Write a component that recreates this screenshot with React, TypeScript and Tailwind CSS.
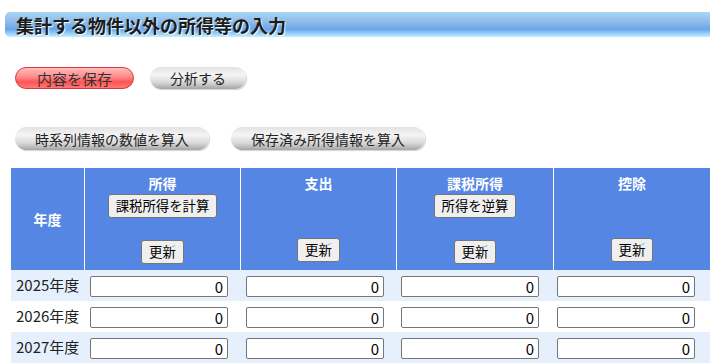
import React from "react";

const years = ["2025年度", "2026年度", "2027年度"];

function SysBtn({ children, className = "" }: { children: React.ReactNode; className?: string }) {
  return (
    <button
      className={
        "h-[24px] px-[7px] border border-[#767676] rounded-[3px] bg-[#efefef] text-[13.4px] leading-none text-black " +
        className
      }
    >
      {children}
    </button>
  );
}

function NumInput() {
  return (
    <input
      readOnly
      value="0"
      className="w-[138px] h-[21px] border border-[#767676] rounded-[2px] bg-white text-right pr-[4px] text-[15px] text-black outline-none"
    />
  );
}

const grayPill =
  "rounded-full bg-[linear-gradient(180deg,#e2e2e2_0%,#f5f5f5_35%,#d8d8d8_70%,#a4a4a4_100%)] shadow-[1px_1px_1px_rgba(0,0,0,0.18)] text-[14px] text-[#222] leading-none";

export default function App() {
  return (
    <div className="w-[710px] h-[363px] overflow-hidden bg-white font-['Noto_Sans_CJK_JP','Noto_Sans',sans-serif] text-[#222]">
      <div className="pt-[12px] pl-[5px]">
        <div className="h-[25px] w-[720px] rounded-l-[5px] bg-[linear-gradient(180deg,#a9d5f5_0%,#8fbbe8_40%,#7aaeea_55%,#6aa8ee_70%,#c0f0ff_100%)] flex items-center pl-[11px]">
          <span className="text-[18px] font-bold text-[#1c1c1c] leading-none [text-shadow:1px_1px_1px_#ffffff]">
            集計する物件以外の所得等の入力
          </span>
        </div>
      </div>

      <div className="flex gap-[16px] pl-[15px] mt-[30px]">
        <button className="w-[119px] h-[22px] rounded-full border border-[#d83a3a] bg-[linear-gradient(180deg,#ffbcbc_0%,#ff8a8a_45%,#ff5454_70%,#ff7878_100%)] text-[15px] text-[#333] leading-none">
          内容を保存
        </button>
        <button className={"w-[96px] h-[22px] " + grayPill}>分析する</button>
      </div>

      <div className="flex gap-[22px] pl-[15px] mt-[38px]">
        <button className={"w-[194px] h-[23px] " + grayPill}>時系列情報の数値を算入</button>
        <button className={"w-[194px] h-[23px] " + grayPill}>保存済み所得情報を算入</button>
      </div>

      <div className="ml-[11px] mt-[18px] w-[720px]">
        <div className="flex h-[102px] bg-[#5686e3] text-white font-bold text-[14px]">
          <div className="w-[74px] border-r border-white flex items-center justify-center">年度</div>
          <div className="w-[156px] border-r border-white flex flex-col items-center pt-[5px]">
            <div className="h-[20px] leading-[20px]">所得</div>
            <SysBtn className="mt-[1px] font-normal">課税所得を計算</SysBtn>
            <SysBtn className="mt-[22px] font-normal">更新</SysBtn>
          </div>
          <div className="w-[156px] border-r border-white flex flex-col items-center pt-[5px]">
            <div className="h-[20px] leading-[20px]">支出</div>
            <SysBtn className="mt-[45px] font-normal">更新</SysBtn>
          </div>
          <div className="w-[157px] border-r border-white flex flex-col items-center pt-[5px]">
            <div className="h-[20px] leading-[20px]">課税所得</div>
            <SysBtn className="mt-[1px] font-normal">所得を逆算</SysBtn>
            <SysBtn className="mt-[22px] font-normal">更新</SysBtn>
          </div>
          <div className="w-[156px] flex flex-col items-center pt-[5px]">
            <div className="h-[20px] leading-[20px]">控除</div>
            <SysBtn className="mt-[45px] font-normal">更新</SysBtn>
          </div>
        </div>
        {years.map((y, i) => (
          <div
            key={y}
            className={"flex items-center h-[31px] " + (i % 2 === 0 ? "bg-[#e6f0fd]" : "bg-white")}
          >
            <div className="w-[74px] pl-[5px] text-[15px] text-[#222]">{y}</div>
            <div className="w-[156px] pl-[5px]">
              <NumInput />
            </div>
            <div className="w-[156px] pl-[5px]">
              <NumInput />
            </div>
            <div className="w-[157px] pl-[4px]">
              <NumInput />
            </div>
            <div className="w-[156px] pl-[3px]">
              <NumInput />
            </div>
          </div>
        ))}
      </div>
    </div>
  );
}
